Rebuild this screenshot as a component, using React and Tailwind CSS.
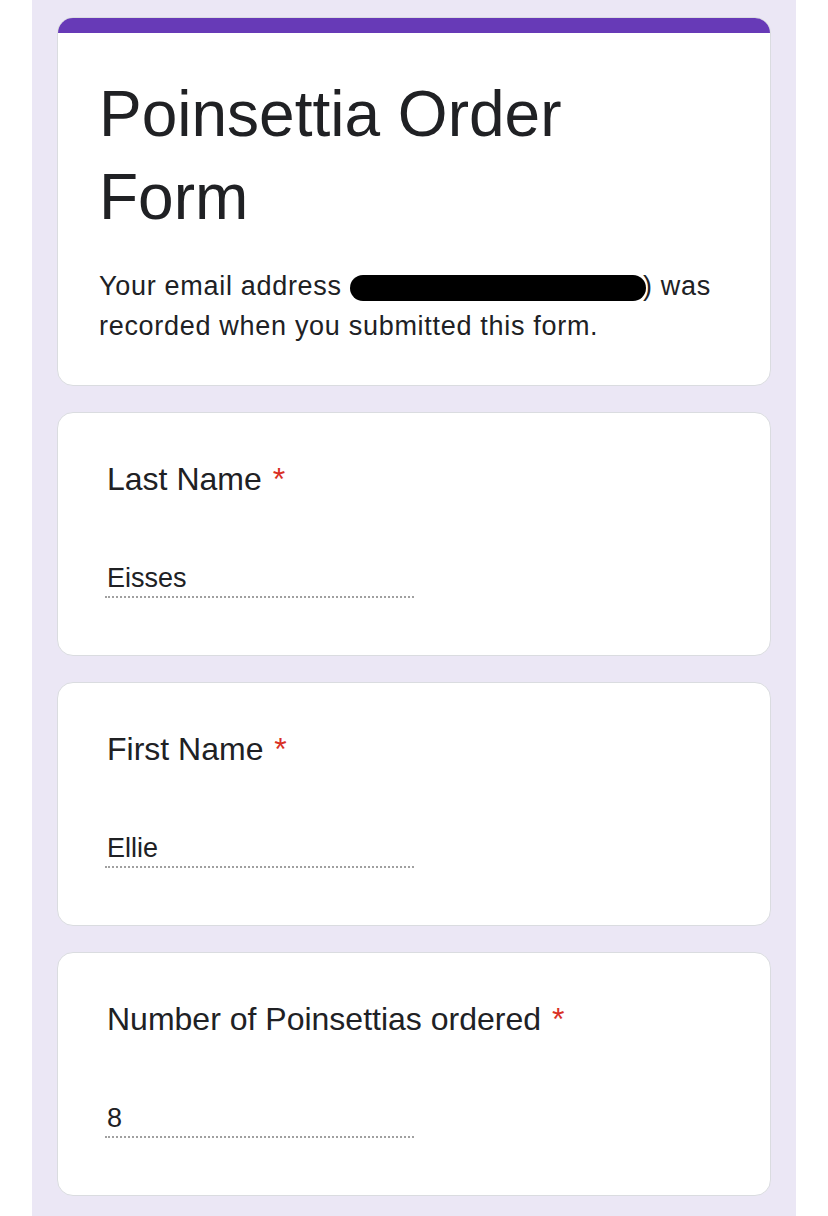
const font = { fontFamily: '"Liberation Sans", Arial, sans-serif' }

function Question({ label, value }) {
  return (
    <div className="bg-white border border-[#dadce0] rounded-[16px] h-[244px] shrink-0 pl-[49px] pt-[46px]">
      <div className="text-[32px] leading-[40px] text-[#202124]">
        {label} <span className="text-[#d93025] ml-[2px]">*</span>
      </div>
      <div className="mt-[61px] w-[309px] -ml-[2px] pl-[2px] border-b-2 border-dotted border-[#a0a0a0] text-[27px] leading-[36px] text-[#202124]">
        {value}
      </div>
    </div>
  )
}

export default function App() {
  return (
    <div className="min-h-screen bg-white" style={font}>
      <div className="mx-[32px] bg-[#ebe7f5] min-h-[1216px] px-[25px] pt-[17px] pb-[20px] flex flex-col gap-[26px]">
        <div className="bg-white border border-[#dadce0] rounded-[16px] overflow-hidden">
          <div className="h-[16px] bg-[#673ab7] -mx-px -mt-px"></div>
          <div className="pl-[41px] pr-[40px] pt-[40px] pb-[39px]">
            <h1 className="max-w-[560px] text-[64px] leading-[83px] text-[#202124] font-normal">Poinsettia Order Form</h1>
            <p className="mt-[27px] text-[27px] leading-[40px] text-[#202124] tracking-[0.7px]">
              Your email address{' '}
              <span className="inline-block align-middle w-[296px] h-[26px] -mr-[3px] bg-black rounded-full"></span>
              ) was recorded when you submitted this form.
            </p>
          </div>
        </div>
        <Question label="Last Name" value="Eisses" />
        <Question label="First Name" value="Ellie" />
        <Question label="Number of Poinsettias ordered" value="8" />
      </div>
    </div>
  )
}
